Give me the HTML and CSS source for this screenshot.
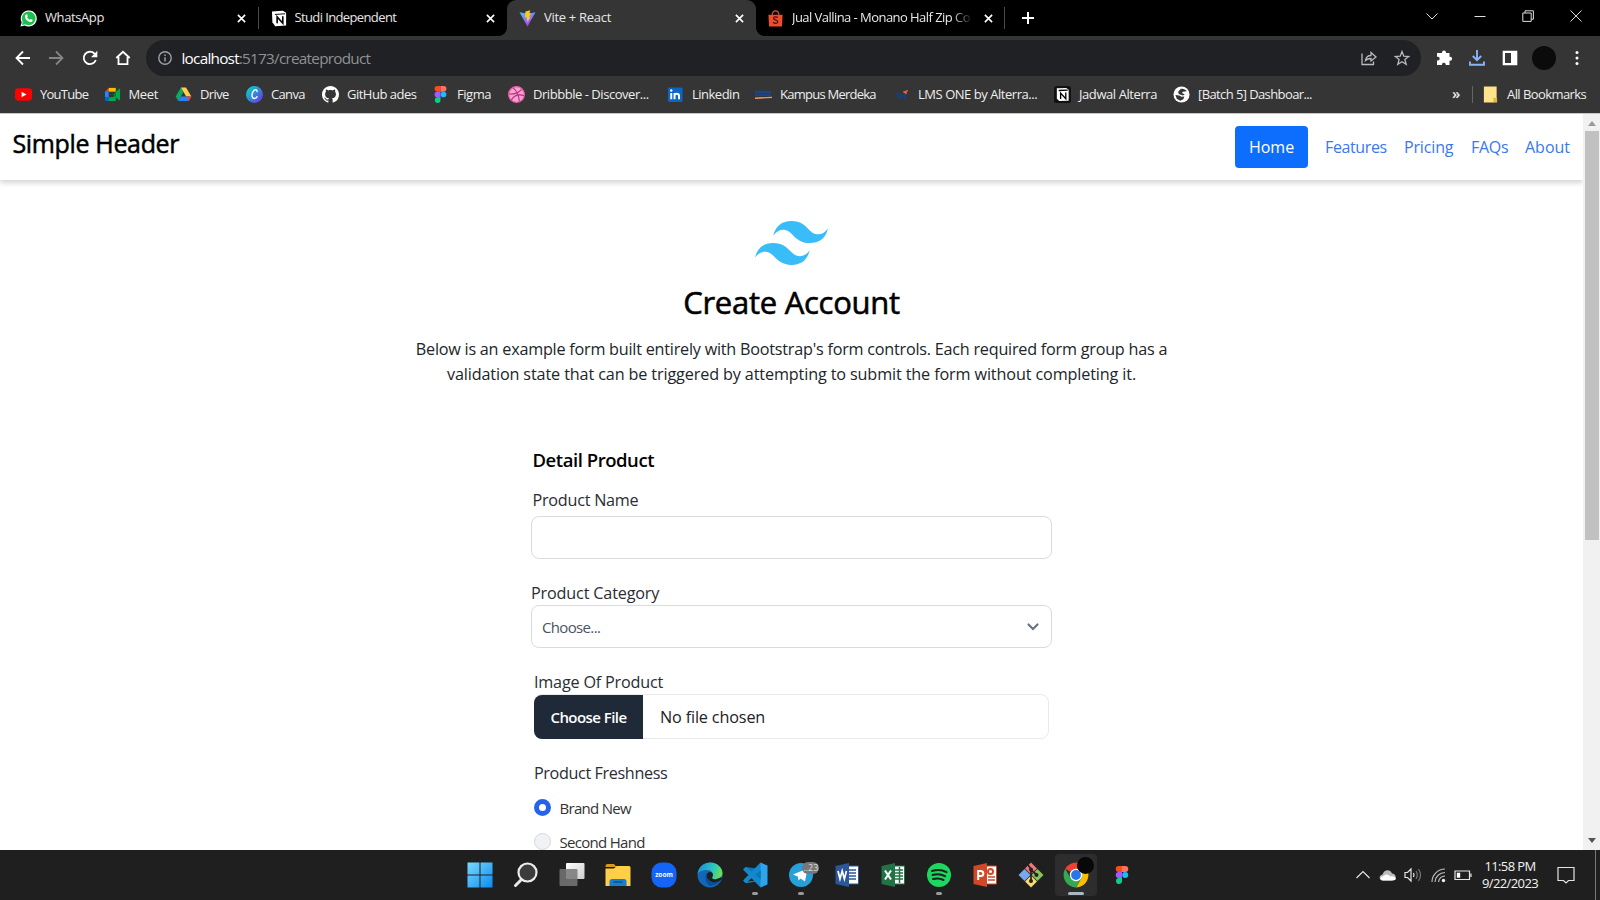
FILE: index.html
```html
<!DOCTYPE html>
<html lang="en">
<head>
<meta charset="utf-8">
<title>Vite + React</title>
<link rel="stylesheet" href="styles.css">
</head>
<body>
<div class="tabs">
  <div class="tab t1">
    <svg class="fav" viewBox="0 0 18 18"><path d="M.5 17.5l1.300-4.500A8.500 8.500 0 1 1 5 16.300z" fill="#fff"/><circle cx="9.200" cy="8.800" r="7.300" fill="#1fbf4f"/><path d="M2 16l1-4 3 3z" fill="#1fbf4f"/><path d="M6.300 4.800c.600-.5 1.200-.4 1.400.2l.6 1.500-.8 1.200c.6 1.300 1.500 2.100 2.800 2.700l1.100-1 1.700.9c.5.3.3 1.300-.3 1.900-1.200 1-3 .6-5-.9-2.200-1.700-3.500-4.700-1.500-6.500z" fill="#fff"/></svg>
    <span class="tt s1">WhatsApp</span><svg class="x" viewBox="0 0 10 10"><path d="M1 1l8 8M9 1L1 9"/></svg>
  </div>
  <div class="tab t2">
    <svg class="fav" viewBox="0 0 18 18"><path d="M1 1.500l11.500-.8L16 3v13.500l-11.500.8L1.500 13z" fill="#fff"/><path d="M4.200 4.700l10.800-.7" stroke="#000"/><path d="M6.500 14V7.300l6 6.700V6.700" stroke="#000" stroke-width="1.700" fill="none"/></svg>
    <span class="tt s2">Studi Independent</span><svg class="x" viewBox="0 0 10 10"><path d="M1 1l8 8M9 1L1 9"/></svg>
  </div>
  <div class="tab t3">
    <svg class="fav" viewBox="0 0 18 18"><defs><linearGradient id="vg" x1="0" y1="0" x2=".5" y2="1"><stop offset="0" stop-color="#41c5ff"/><stop offset="1" stop-color="#b23cff"/></linearGradient></defs><path d="M.5 2.500L9 17.500 17.500 2.500 9 4z" fill="url(#vg)"/><path d="M12 .3L6.800 1.500 6.300 8l2.200-.4-.6 3.600 1.300-.4-.7 3L12.500 7l-2 .3 2.500-4-2 .3z" fill="#ffc81e"/></svg>
    <span class="tt s3">Vite + React</span><svg class="x" viewBox="0 0 10 10"><path d="M1 1l8 8M9 1L1 9"/></svg>
  </div>
  <div class="tab t4">
    <svg class="fav" viewBox="0 0 18 18"><path d="M1.500 5h15l-.7 12.500H2.200z" fill="#ee4d2d"/><path d="M5.500 5c0-5.500 7-5.500 7 0" fill="none" stroke="#ee4d2d" stroke-width="1.300"/><path d="M11.500 8c-1.500-1.300-5-1-4.500 1 .4 1.700 4.700 1.400 4.500 3.700-.2 1.800-3.500 1.800-5 .3" fill="none" stroke="#4a1208" stroke-width="1.300"/></svg>
    <span class="tt s4">Jual Vallina - Monano Half Zip Co</span><svg class="x" viewBox="0 0 10 10"><path d="M1 1l8 8M9 1L1 9"/></svg>
  </div>
  <svg class="plus" viewBox="0 0 12 12"><path d="M6 0v12M0 6h12" stroke="#fff" stroke-width="2"/></svg>
  <div class="win">
    <svg viewBox="0 0 12 12"><path d="M.5 3.500L6 9l5.500-5.500"/></svg>
    <svg viewBox="0 0 12 12"><path d="M.5 6.500h11"/></svg>
    <svg viewBox="0 0 12 12"><path d="M.8 3h8.400v8.400H.8zM3 3V.8h8.400v8.400H9.200"/></svg>
    <svg viewBox="0 0 12 12"><path d="M.5.500l11 11M11.500.5l-11 11"/></svg>
  </div>
</div>

<div class="toolbar">
  <div class="nav">
    <svg viewBox="0 0 16 16"><path d="M15 8H2M8 1.500L1.500 8 8 14.500"/></svg>
    <svg class="dim" viewBox="0 0 16 16"><path d="M1 8h13M8 1.500L14.500 8 8 14.500"/></svg>
    <svg viewBox="0 0 16 16"><path d="M13.800 10A6.200 6.200 0 1 1 12.500 3.700L14 5.300"/><path d="M15.300.8v6.400H9z" fill="#fff" stroke="none"/></svg>
    <svg viewBox="0 0 16 16"><path d="M1.300 8L8 1.800 14.700 8M3.500 7v7.200h9V7"/></svg>
  </div>
  <div class="omni">
    <svg class="info" viewBox="0 0 14 14"><circle cx="7" cy="7" r="6.200" fill="none" stroke="#9aa0a6" stroke-width="1.400"/><path d="M7 6.200v4.300M7 3.500v1.500" stroke="#9aa0a6" stroke-width="1.500"/></svg>
    <span class="url"><b>localhost</b>:5173/createproduct</span>
    <svg class="share" viewBox="0 0 16 16"><path d="M1 3.500v11h11.500v-3M4.500 10.500C5 7 7 5.500 10 5.500V2.500L15 7l-5 4V8.500c-2.500 0-4 .5-5.500 2z"/></svg>
    <svg class="star" viewBox="0 0 16 16"><path d="M8 1.600l1.800 4.600 4.900.3-3.800 3.100 1.300 4.800L8 11.700l-4.200 2.700 1.300-4.800L1.300 6.500l4.900-.3z"/></svg>
  </div>
  <div class="ext">
    <svg viewBox="0 0 16 16"><path d="M6 2.500a2 2 0 0 1 4 0v.5h3.500v3.700h.6a2 2 0 0 1 0 4h-.6V15H9.700v-.8a1.900 1.900 0 0 0-3.700 0v.8H1v-4.500h.8a1.900 1.900 0 0 0 0-3.800H1V3h5z" fill="#fff"/></svg>
    <svg viewBox="0 0 16 16"><path d="M8 0v10M3.800 6L8 10.200 12.200 6M1 11.500v3.300h14v-3.300" fill="none" stroke="#8ab4f8" stroke-width="1.900"/></svg>
    <svg viewBox="0 0 16 16"><path d="M.7.700h14.600v14.600H.7zM3 3v10h6V3z" fill="#fff" fill-rule="evenodd"/></svg>
    <i class="avatar"></i>
    <svg viewBox="0 0 16 16"><g fill="#fff"><circle cx="8" cy="2.500" r="1.500"/><circle cx="8" cy="8" r="1.500"/><circle cx="8" cy="13.500" r="1.500"/></g></svg>
  </div>
</div>

<div class="marks">
  <div class="bm b1"><svg viewBox="0 0 18 18"><rect y="2.500" width="18" height="13" rx="3.500" fill="#f00"/><path d="M7 6l5.200 3L7 12z" fill="#fff"/></svg><span>YouTube</span></div>
  <div class="bm b2"><svg viewBox="0 0 18 18"><path d="M1 6l4-4v4z" fill="#ea4335"/><path d="M5 2h7.500v4H5z" fill="#fbbc04"/><path d="M1 6h4v6H1z" fill="#2684fc"/><path d="M1 12h4v4H2.500Q1 16 1 14.500z" fill="#0066da"/><path d="M5 12h4l3.500-2v6H5zM12.500 6v6L17 15.500v-13z" fill="#00ac47"/><path d="M9.500 9l3-3v6z" fill="#00832d"/></svg><span>Meet</span></div>
  <div class="bm b3"><svg viewBox="0 0 18 18"><path d="M6.300 1.500L9 6.300 3.500 16 .7 11.200z" fill="#11a861"/><path d="M6.300 1.500h5.400L17.300 11.200h-5.500z" fill="#ffcf48"/><path d="M6.200 11.200h11.100L14.500 16h-11z" fill="#2684fc"/><path d="M11.800 11.200h5.500L14.500 16z" fill="#ea4335"/></svg><span>Drive</span></div>
  <div class="bm b4"><svg viewBox="0 0 18 18"><defs><linearGradient id="cg" x1="0" y1="0" x2="1" y2="1"><stop offset="0.200" stop-color="#10bfd0"/><stop offset="1" stop-color="#7527e8"/></linearGradient></defs><circle cx="9" cy="9" r="9" fill="url(#cg)"/><path d="M11.500 6.500C12.500 3 8.500 3.200 7 6.800c-1.600 4 0 6.900 2.300 6.300 1.300-.3 2.300-1.300 2.700-2.300" fill="none" stroke="#fff" stroke-width="1.500"/></svg><span>Canva</span></div>
  <div class="bm b5"><svg viewBox="0 0 16 16"><path fill="#fff" d="M8 0C3.580 0 0 3.580 0 8c0 3.540 2.290 6.530 5.470 7.590.4.070.55-.17.55-.38 0-.19-.01-.82-.01-1.490-2.010.37-2.530-.49-2.690-.94-.09-.23-.48-.94-.82-1.130-.28-.15-.68-.52-.01-.53.63-.01 1.080.58 1.230.82.72 1.210 1.870.87 2.330.66.07-.52.28-.87.51-1.070-1.780-.2-3.640-.89-3.640-3.950 0-.87.31-1.590.82-2.150-.08-.2-.36-1.020.08-2.120 0 0 .67-.21 2.200.82.64-.18 1.320-.27 2-.27s1.360.09 2 .27c1.530-1.040 2.200-.82 2.200-.82.44 1.100.16 1.920.08 2.120.51.56.82 1.270.82 2.150 0 3.070-1.870 3.750-3.650 3.950.29.25.54.73.54 1.480 0 1.070-.01 1.930-.01 2.200 0 .21.15.46.55.38A8.010 8.010 0 0 0 16 8c0-4.420-3.580-8-8-8z"/></svg><span>GitHub ades</span></div>
  <div class="bm b6"><svg viewBox="0 0 18 18"><use href="#fig"/></svg><span>Figma</span></div>
  <div class="bm b7"><svg viewBox="0 0 18 18"><circle cx="9" cy="9" r="8.300" fill="#f9a1d0" stroke="#ea5fae" stroke-width="1.300"/><path d="M5.500 2C9 5 11.500 10 12 16M1 8.500c5 .3 10-1 13.500-5M3.500 15C6 10 11 8.500 17 10" fill="none" stroke="#b02c78" stroke-width="1.100"/></svg><span>Dribbble - Discover...</span></div>
  <div class="bm b8"><svg viewBox="0 0 18 18"><rect x="1" y="1.500" width="15.500" height="15.500" rx="1.500" fill="#0a66c2"/><path d="M4.500 7.500V14M8 14V7.500M8 10.500c0-3 4.700-3 4.700 0V14" fill="none" stroke="#fff" stroke-width="2.100"/><circle cx="4.500" cy="4.700" r="1.300" fill="#fff"/></svg><span>Linkedin</span></div>
  <div class="bm b9"><svg viewBox="0 0 18 18"><path d="M0 5h17v5.500H0z" fill="#1f4480"/><path d="M0 8h17" stroke="#303a4c"/><path d="M0 13l18-1" stroke="#eb9a70" stroke-width="1.500"/></svg><span>Kampus Merdeka</span></div>
  <div class="bm b10"><svg viewBox="0 0 18 18"><path d="M2 10l3-2 2 6M8 9v5M11 8v5M13 8v6" stroke="#173f78" stroke-width="2" fill="none"/><path d="M10 6l6-2-2 5z" fill="#e35c3e"/></svg><span>LMS ONE by Alterra...</span></div>
  <div class="bm b11"><svg viewBox="0 0 18 18"><rect width="18" height="18" rx="3" fill="#111"/><path d="M3 2.500l10-.5 2.500 2v11.500l-10 .5L3 13.500z" fill="#fff"/><path d="M5 4.800l9.500-.5M7 13.700V7.500l5.500 6V7" stroke="#000" stroke-width="1.400" fill="none"/></svg><span>Jadwal Alterra</span></div>
  <div class="bm b12"><svg viewBox="0 0 18 18"><circle cx="9" cy="9" r="8.500" fill="#fff"/><path d="M8 3.200c2-1 5.500.3 6.500 2.300L10.500 6l-1 1.500 3 1.500-2 1-4.500-1.500-.5-2.500zM2.500 9.500l4 .5 2.500 1.500 3-.5-1 3-3.500 1.500-3.500-2z" fill="#35363a"/></svg><span>[Batch 5] Dashboar...</span></div>
  <span class="more">»</span>
  <div class="bm b13"><svg viewBox="0 0 18 18"><path d="M2 .5h13.500v12l-3 5H2z" fill="#ffe28a"/><path d="M12 17.500v-5h4v5z" fill="#e5b93e"/></svg><span>All Bookmarks</span></div>
</div>

<div class="view">
  <main class="page">
    <header class="head">
      <h1>Simple Header</h1>
      <nav class="links"><a class="home">Home</a><a class="l1">Features</a><a class="l2">Pricing</a><a class="l3">FAQs</a><a class="l4">About</a></nav>
    </header>
    <section class="intro">
      <svg class="logo" viewBox="0 0 54 32.400"><path fill="#38bdf8" d="M27 0c-7.200 0-11.700 3.600-13.500 10.800 2.700-3.600 5.850-4.950 9.450-4.050 2.054.513 3.522 2.004 5.147 3.653C30.744 13.090 33.808 16.200 40.500 16.200c7.200 0 11.700-3.600 13.500-10.800-2.700 3.600-5.850 4.950-9.450 4.050-2.054-.513-3.522-2.004-5.147-3.653C36.756 3.110 33.692 0 27 0zM13.500 16.200C6.300 16.200 1.800 19.800 0 27c2.700-3.600 5.850-4.950 9.450-4.050 2.054.514 3.522 2.004 5.147 3.653C17.244 29.290 20.308 32.400 27 32.400c7.200 0 11.700-3.600 13.500-10.800-2.700 3.600-5.850 4.950-9.450 4.050-2.054-.513-3.522-2.004-5.147-3.653C23.256 19.310 20.192 16.200 13.500 16.200z"/></svg>
      <h2><span>Create Account</span></h2>
      <p><span class="p1">Below is an example form built entirely with Bootstrap's form controls. Each required form group has a</span><br><span class="p2">validation state that can be triggered by attempting to submit the form without completing it.</span></p>
    </section>
    <form class="form">
      <h3><span>Detail Product</span></h3>
      <label class="lb n1">Product Name</label>
      <div class="box"></div>
      <label class="lb n2">Product Category</label>
      <div class="box select"><span>Choose...</span><svg viewBox="0 0 12 8"><path d="M1.500 1.500L6 6l4.500-4.500" fill="none" stroke="#6b7280" stroke-width="2.200" stroke-linecap="round"/></svg></div>
      <label class="lb n3">Image Of Product</label>
      <div class="file"><span class="btn"><span>Choose File</span></span><span class="none">No file chosen</span></div>
      <label class="lb n4">Product Freshness</label>
      <div class="opt"><i class="radio on"></i><span class="o1">Brand New</span></div>
      <div class="opt"><i class="radio"></i><span class="o2">Second Hand</span></div>
    </form>
  </main>
  <div class="scroll"><i class="up"></i><i class="thumb"></i><i class="down"></i></div>
</div>

<div class="taskbar">
  <div class="apps">
    <div class="app"><svg viewBox="0 0 26 26"><defs><linearGradient id="wg" x1="0" y1="0" x2="1" y2="1"><stop offset="0" stop-color="#7ad9ff"/><stop offset="1" stop-color="#0a8bf0"/></linearGradient></defs><path d="M.5.500h12v12H.5zM13.500.5h12v12h-12zM.5 13.500h12v12H.5zM13.500 13.500h12v12h-12z" fill="url(#wg)"/></svg></div>
    <div class="app"><svg viewBox="0 0 26 26"><path d="M9 17l-6.500 6.500" stroke="#e8e8e8" stroke-width="3" stroke-linecap="round"/><circle cx="14.500" cy="10.500" r="9" fill="#3c3c3c" stroke="#ececec" stroke-width="2.200"/></svg></div>
    <div class="app"><svg viewBox="0 0 26 26"><defs><linearGradient id="tg" x1="0" y1="0" x2="1" y2="1"><stop offset="0" stop-color="#fff"/><stop offset="1" stop-color="#ccc"/></linearGradient></defs><rect x="7" y="1" width="18.500" height="16" rx="1" fill="url(#tg)"/><rect x=".5" y="7" width="18" height="17" rx="1" fill="#777" fill-opacity=".85"/></svg></div>
    <div class="app"><svg viewBox="0 0 26 26"><path d="M.5 4q0-2 2-2H9l2.500 3H.5z" fill="#d99a14"/><path d="M.5 6.500H9L11.500 4H24q1.500 0 1.500 1.500V24H.5z" fill="#ffcf48"/><path d="M4.500 24v-4.500q0-2.500 2.500-2.500h12q2.500 0 2.500 2.500V24z" fill="#1680cf"/><path d="M8.500 20h9" stroke="#0a5a9e" stroke-width="2"/></svg></div>
    <div class="app"><svg viewBox="0 0 26 26"><rect x=".5" y=".5" width="25" height="25" rx="10" fill="#1464f6"/><text x="13" y="15.300" text-anchor="middle" class="zm">zoom</text></svg></div>
    <div class="app"><svg viewBox="0 0 26 26"><defs><linearGradient id="eg" x1="0" y1=".3" x2="1" y2=".5"><stop offset="0" stop-color="#1b8fd8"/><stop offset=".6" stop-color="#2cc4c4"/><stop offset="1" stop-color="#6be24e"/></linearGradient></defs><circle cx="13" cy="13" r="12.500" fill="#1267b8"/><path d="M.5 12C1.500 4 8 .5 13.500.5 20.500.5 25.500 6 25.500 11c0 4-3.500 6.500-7 6.500-3 0-4-1-3.200-2.500 2-3.500-1-7-5.300-7-4.500 0-8.500 2-9.500 4z" fill="url(#eg)"/><path d="M10 11c-3 4-1.500 10 3 13 4.500-.5 8.500-3 10.500-6-4 2.500-10 1.500-10.500-2.500 0-2 .5-4-3-4.500z" fill="#0d4d92"/><path d="M15.300 15c2-3.500-1-6-4-4.500-3 2.500-1 8 4.200 9.500 3 .8 6-.5 8.500-2 .8.800-1 4-1 4L24.500 20V15l-6 2.500c-3 0-4-1-3.200-2.500z" fill="#1f1f1f"/></svg></div>
    <div class="app run"><svg viewBox="0 0 26 26"><path d="M18.500 7v12.500L1.500 6.500 4 5z" fill="#0878b8"/><path d="M18.500 19L1.500 19.500 4 21z" fill="#1e93d8"/><path d="M1 18.500L18.500.5l2 6L4 21zM1 7.500l3-2.500L20.500 19l-2 6.500z" fill="#1488cf"/><path d="M18.500.5l7 3v19l-7 3z" fill="#2ba5ee"/></svg></div>
    <div class="app run"><svg viewBox="0 0 26 26"><circle cx="13" cy="13" r="12" fill="#27a0d9"/><path d="M5 12.500l14.500-6-2.500 13-4.500-3-2 2-.7-4z" fill="#fff"/></svg><em class="badge">..23</em></div>
    <div class="app"><svg viewBox="0 0 26 26"><path d="M12 4h12.500v18H12z" fill="#fff" stroke="#2b579a"/><path d="M14 8h8M14 11h8M14 14h8M14 17h8" stroke="#2b579a" stroke-width="1.500"/><path d="M1.500 4L15 1v24L1.500 22z" fill="#2b579a"/><path d="M4 9l2 8 2.200-8 2.200 8 2-8" fill="none" stroke="#fff" stroke-width="1.700"/></svg></div>
    <div class="app"><svg viewBox="0 0 26 26"><path d="M12 4h12.500v18H12z" fill="#fff" stroke="#217346"/><path d="M15 8h8M15 11h8M15 14h8M15 17h8M19.500 5v16" stroke="#217346" stroke-width="1.500"/><path d="M1.500 4L15 1v24L1.500 22z" fill="#217346"/><path d="M5 8.500l6 9M11 8.500l-6 9" stroke="#fff" stroke-width="2"/></svg></div>
    <div class="app run"><svg viewBox="0 0 26 26"><circle cx="13" cy="13" r="12" fill="#1ed760"/><path d="M6 9c5-1.500 10.500-1 14.500 1.200M6.500 13c4.500-1.300 9-.8 12.500 1.200M7 17c4-1 7.500-.6 10.500 1" fill="none" stroke="#17231a" stroke-width="2" stroke-linecap="round"/></svg></div>
    <div class="app"><svg viewBox="0 0 26 26"><path d="M12 4h12.500v18H12z" fill="#fff" stroke="#d24726"/><path d="M16 15h7M16 18h7" stroke="#d24726" stroke-width="1.500"/><circle cx="18.500" cy="9.500" r="2.500" fill="none" stroke="#d24726" stroke-width="2"/><path d="M1.500 4L15 1v24L1.500 22z" fill="#d24726"/><path d="M6.200 18V9h2.500c3.500 0 3.500 5 0 5H6.500" fill="none" stroke="#fff" stroke-width="2"/></svg></div>
    <div class="app"><svg viewBox="0 0 26 26"><path d="M13 .5l6 6-6 6-6-6z" fill="#ef7576"/><path d="M6.500 7l6 6-6 6-6-6z" fill="#7aa7ee"/><path d="M19.500 7l6 6-6 6-6-6z" fill="#86c45c"/><path d="M13 13.500l6 6-6 6-6-6z" fill="#fbd96a"/><path d="M10 3l3 4v13M13 8l6 5" stroke="#222" stroke-width="1.700" fill="none"/><circle cx="13" cy="7.500" r="2" fill="#222"/><circle cx="13" cy="19" r="2" fill="#222"/><circle cx="18.500" cy="13" r="2" fill="#222"/></svg></div>
    <div class="app active"><svg viewBox="0 0 26 26"><path d="M13 13L2.200 6.800A12.500 12.500 0 0 1 23.800 6.800z" fill="#ea4335"/><path d="M13 13V6.800h10.800A12.500 12.500 0 0 1 13 25.500l5.400-9.400z" fill="#fbbc04"/><path d="M13 13l5.400 3.100L13 25.500A12.500 12.500 0 0 1 2.200 6.800l5.400 9.300z" fill="#34a853"/><circle cx="13" cy="13" r="6.200" fill="#fff"/><circle cx="13" cy="13" r="4.900" fill="#2a75e8"/></svg><em class="dot"></em></div>
    <div class="app"><svg class="small" viewBox="0 0 18 18"><g id="fig"><path d="M9 0H5.700a3 3 0 0 0 0 6H9z" fill="#f24e1e"/><path d="M9 0h3.300a3 3 0 0 1 0 6H9z" fill="#ff7262"/><path d="M9 6H5.700a3 3 0 0 0 0 6H9z" fill="#a259ff"/><circle cx="12.200" cy="9" r="3" fill="#1abcfe"/><path d="M9 12H5.700a3 3 0 1 0 3.300 3z" fill="#0acf83"/></g></svg></div>
  </div>
  <div class="tray">
    <svg class="i1" viewBox="0 0 18 18"><path d="M2.500 12L9 5.500l6.500 6.500"/></svg>
    <svg class="i2" viewBox="0 0 18 18"><path d="M4 14.500C-.5 14.500-.3 9 3.500 8.500 5 3.500 11 2.500 13 7.500c4 0 6 6-.5 7z" fill="#bcbcbc" stroke="none"/><path d="M4 14.500C.5 14 1 11 3.500 10.500c4-3.500 6-2 8 0 5-1.500 8 4 2 4z" fill="#fff" stroke="none"/></svg>
    <svg class="i3" viewBox="0 0 18 18"><path d="M1 6.500h2.500L7 3v12l-3.500-3.500H1zM9.500 7q1 2 0 4"/><path d="M12 5q2.500 4 0 8M14.500 3q4 6 0 12" stroke="#777"/></svg>
    <svg class="i4" viewBox="0 0 18 18"><path d="M3 16A13 13 0 0 1 16 3M6 16A10 10 0 0 1 16 6.500M9.500 16A7 7 0 0 1 16 10" stroke="#bbb"/><circle cx="14.500" cy="14.500" r="1.700" fill="#eee" stroke="none"/></svg>
    <svg class="i5" viewBox="0 0 18 18"><path d="M1 5h14.500v8.500H1zM17 7.500v3.500"/><path d="M2.800 6.700h3.400v5H2.800z" fill="#fff" stroke="none"/></svg>
    <div class="clock"><span class="c1">11:58 PM</span><span class="c2">9/22/2023</span></div>
    <svg class="i6" viewBox="0 0 18 18"><path d="M1 1.500h16v13h-5.500L9 17l-2.500-2.500H1z"/></svg>
    <i class="edge"></i>
  </div>
</div>
</body>
</html>
```
FILE: styles.css
```css
* { box-sizing: border-box; }
body { margin: 0; width: 1600px; height: 900px; overflow: hidden; font-family: "Open Sans", "Noto Sans", sans-serif; display: flex; flex-direction: column; background: #fff; }
svg { display: block; flex: none; overflow: visible; }
span, a, label { white-space: nowrap; }

/* tab strip */
.tabs { height: 36px; flex: none; background: #000; display: flex; align-items: center; color: #e8e8e8; font-size: 13px; }
.tab { height: 36px; display: flex; align-items: center; position: relative; }
.tab .fav { width: 17px; height: 17px; }
.tab .tt { margin-left: 8px; flex: 1; overflow: hidden; line-height: 20px; padding-bottom: 2px; }
.s1 { letter-spacing: -.4px; }
.s2 { letter-spacing: -.62px; }
.s3 { letter-spacing: -.3px; }
.s4 { letter-spacing: -.55px; }
.x { width: 9px; height: 9px; }
.x path { stroke: #fff; stroke-width: 1.800; }
.t1 { width: 259px; padding: 0 12px 0 20px; border-image: linear-gradient(#0000 22%, #4a4a4a 22% 78%, #0000 78%) 1; border-right: 1px solid #444; }
.t2 { width: 248px; padding: 0 12px 0 12px; }
.t2 .tt { margin-left: 6.500px; }
.t3 { width: 249px; padding: 0 12px 0 12px; background: #353535; border-radius: 9px 9px 0 0; }
.t3::before, .t3::after { content: ""; position: absolute; bottom: 0; width: 8px; height: 8px; }
.t3::before { left: -8px; background: radial-gradient(circle at 0 0, #0000 7.500px, #353535 8px); }
.t3::after { right: -8px; background: radial-gradient(circle at 100% 0, #0000 7.500px, #353535 8px); }
.t4 { width: 249px; padding: 0 11px 0 11px; border-image: linear-gradient(#0000 22%, #4a4a4a 22% 78%, #0000 78%) 1; border-right: 1px solid #444; }
.t4 .tt { margin-right: 11px; -webkit-mask-image: linear-gradient(90deg, #000 88%, #0000 100%); }
.plus { width: 12px; height: 12px; margin-left: 17px; }
.win { margin-left: auto; display: flex; gap: 36px; padding: 0 18px 5px 0; }
.win svg { width: 12px; height: 12px; }
.win path { fill: none; stroke: #ddd; stroke-width: 1; }

/* address row */
.toolbar { height: 40px; flex: none; background: #353535; display: flex; align-items: center; padding-top: 4px; }
.nav { width: 146px; flex: none; display: flex; gap: 17.300px; padding-left: 15px; }
.nav svg { width: 16px; height: 16px; fill: none; stroke: #fff; stroke-width: 1.800; }
.nav .dim { stroke: #858585; }
.omni { width: 1275px; flex: none; height: 36px; border-radius: 18px; background: #202124; display: flex; align-items: center; padding: 0 11px 0 12px; }
.info { width: 14px; height: 14px; }
.url { margin-left: 9.500px; flex: 1; color: #8f9194; font-size: 15.300px; letter-spacing: -.75px; line-height: 22px; }
.url b { color: #fff; font-weight: 400; }
.share, .star { width: 16px; height: 16px; fill: none; stroke: #b8babd; stroke-width: 1.300; }
.share { margin-right: 17px; }
.ext { display: flex; align-items: center; padding-left: 15px; }
.ext svg { width: 16px; height: 16px; margin-right: 17px; }
.ext .avatar { width: 24px; height: 24px; flex: none; border-radius: 50%; background: #0b0b0c; margin: 0 13px 0 -3px; }

/* bookmarks */
.marks { height: 37px; flex: none; background: #353535; display: flex; align-items: center; padding-left: 15px; color: #eee; font-size: 13px; letter-spacing: -.5px; }
.bm { display: flex; align-items: center; gap: 8px; height: 36px; flex: none; }
.bm svg { width: 17px; height: 17px; }
.bm span { padding-bottom: 2px; }
.b1 { width: 88.500px; letter-spacing: -.75px; }
.b2 { width: 71.500px; letter-spacing: -.35px; }
.b3 { width: 71px; letter-spacing: -.6px; }
.b4 { width: 76px; letter-spacing: -.65px; }
.b5 { width: 110px; }
.b6 { width: 76px; letter-spacing: -.45px; }
.b7 { width: 159px; letter-spacing: -.46px; }
.b8 { width: 88px; }
.b9 { width: 138px; letter-spacing: -.75px; }
.b10 { width: 161px; letter-spacing: -.46px; }
.b11 { width: 119px; letter-spacing: -.42px; }
.b12 { width: 279px; letter-spacing: -.6px; }
.more { width: 20px; flex: none; font-size: 15px; font-weight: 600; line-height: 20px; padding-bottom: 4px; }
.b13 { padding-left: 9px; height: 17px; border-left: 1px solid #666; letter-spacing: -.57px; }

/* page */
.view { height: 737px; flex: none; display: flex; overflow: hidden; border-top: 1px solid #c8c8c8; }
.page { width: 1583px; flex: none; }
.head { height: 66px; display: flex; justify-content: space-between; align-items: flex-start; padding: 12px 13px 0 12.500px; box-shadow: 0 3px 5px rgba(0, 0, 0, .17); }
h1 { margin: -1px 0 0; font-size: 25px; font-weight: 400; line-height: 36px; letter-spacing: -.35px; color: #000; -webkit-text-stroke: .5px #000; }
.links { display: flex; align-items: center; color: #3b78ee; font-size: 16px; line-height: 42px; }
.links a { display: block; }
.home { width: 73px; height: 42px; text-align: center; background: #0d6efd; color: #fff; border-radius: 4px; }
.l1 { width: 79px; margin-left: 17px; letter-spacing: -.37px; }
.l2 { width: 67px; letter-spacing: -.15px; }
.l3 { width: 54px; letter-spacing: -.3px; }
.l4 { width: 45px; }
.intro { height: 264px; padding-top: 41px; display: flex; flex-direction: column; align-items: center; text-align: center; }
.logo { width: 73px; height: 44px; }
h2 { margin: 14px 0 0; font-size: 31px; font-weight: 400; line-height: 46px; letter-spacing: -.27px; -webkit-text-stroke: .6px #000; }
p { margin: 12px 0 0; font-size: 16.200px; line-height: 25px; color: #212529; }
.p1 { letter-spacing: -.23px; }
.p2 { letter-spacing: -.13px; }
.form { width: 521px; margin-left: 531px; }
h3 { margin: 0; padding-left: 1.500px; font-size: 18.500px; font-weight: 600; line-height: 32px; height: 43px; letter-spacing: -.45px; }
.lb { display: block; height: 24px; line-height: 24px; font-size: 16.200px; color: #2a2d33; }
.n1 { padding-left: 1.500px; height: 29px; line-height: 26px; letter-spacing: -.25px; }
.n2 { letter-spacing: -.17px; }
.box { height: 43px; border: 1px solid #d9dbe1; border-radius: 8px; margin-bottom: 22px; display: flex; align-items: center; justify-content: space-between; padding: 0 12px 0 10px; }
.select { font-size: 15px; color: #4b5563; letter-spacing: -.65px; }
.select svg { width: 12px; height: 8px; }
.n3, .n4 { padding-left: 3px; }
.n3 { letter-spacing: -.2px; }
.file { width: 515px; height: 45px; margin-left: 3px; border: 1px solid #e8eaee; border-radius: 8px; display: flex; align-items: center; margin-bottom: 22px; }
.btn { width: 109px; height: 44px; margin-left: -1px; background: #1f2937; color: #fff; border-radius: 8px 0 0 8px; font-size: 15px; font-weight: 600; line-height: 44px; text-align: center; letter-spacing: -.55px; }
.none { margin-left: 17px; font-size: 16.200px; letter-spacing: -.15px; color: #222; }
.n4 { height: 30px; letter-spacing: -.38px; }
.opt { height: 33.500px; display: flex; align-items: center; gap: 8.500px; padding-left: 3px; font-size: 15px; letter-spacing: -.7px; color: #333; line-height: 20px; }
.opt span { padding-top: 1px; }
.radio { width: 17px; height: 17px; border-radius: 50%; border: 1px solid #d4d7dc; background: #f1f2f4; }
.radio.on { border: 5.500px solid #2563eb; background: #fff; }
.scroll { width: 17px; flex: none; background: #f1f1f1; display: flex; flex-direction: column; align-items: center; }
.up, .down { width: 0; border: 4px solid transparent; }
.up { border-bottom: 5px solid #9a9a9a; border-top: 0; margin: 7px 0 5px; }
.down { border-top: 5px solid #555; border-bottom: 0; margin-top: auto; margin-bottom: 7px; }
.thumb { width: 14px; height: 409px; background: #c1c1c1; }

/* taskbar */
.taskbar { height: 50px; flex: none; background: #1f1f1f; display: flex; }
.apps { display: flex; padding-left: 457.500px; width: 1347px; flex: none; }
.app { width: 45.850px; height: 50px; display: flex; align-items: center; justify-content: center; position: relative; flex: none; }
.app svg { width: 26px; height: 26px; }
.app svg.small { width: 18px; height: 18px; }
.zm { font: 700 6.500px "Open Sans", sans-serif; fill: #fff; }
.run::after, .active::after { content: ""; position: absolute; bottom: 5px; width: 6px; height: 3px; border-radius: 2px; background: #9a9a9a; }
.active::after { width: 16px; background: #a9b9c4; }
.active::before { content: ""; position: absolute; left: 2px; top: 4px; width: 42px; height: 42px; border-radius: 4px; background: #2d2d2d; }
.active svg { position: relative; }
.badge { position: absolute; left: 24px; top: 12px; width: 17px; height: 12px; border-radius: 6px; background: #777; color: #ddd; font: 9px/12px "Open Sans", sans-serif; text-align: center; }
.dot { position: absolute; left: 24px; top: 7px; width: 17px; height: 17px; border-radius: 50%; background: #080808; }
.tray { display: flex; align-items: center; flex: 1; color: #f2f2f2; font-size: 13px; padding-left: 7px; }
.tray svg { width: 18px; height: 18px; fill: none; stroke: #e5e5e5; stroke-width: 1.200; }
.i2, .i3, .i4, .i5 { margin-left: 7px; }
.clock { width: 66px; margin-left: 5px; display: flex; flex-direction: column; align-items: center; line-height: 17.500px; letter-spacing: -.6px; }
.tray .i6 { margin-left: 13.500px; }
.edge { width: 1px; height: 50px; background: #777; margin-left: 20px; }
```
